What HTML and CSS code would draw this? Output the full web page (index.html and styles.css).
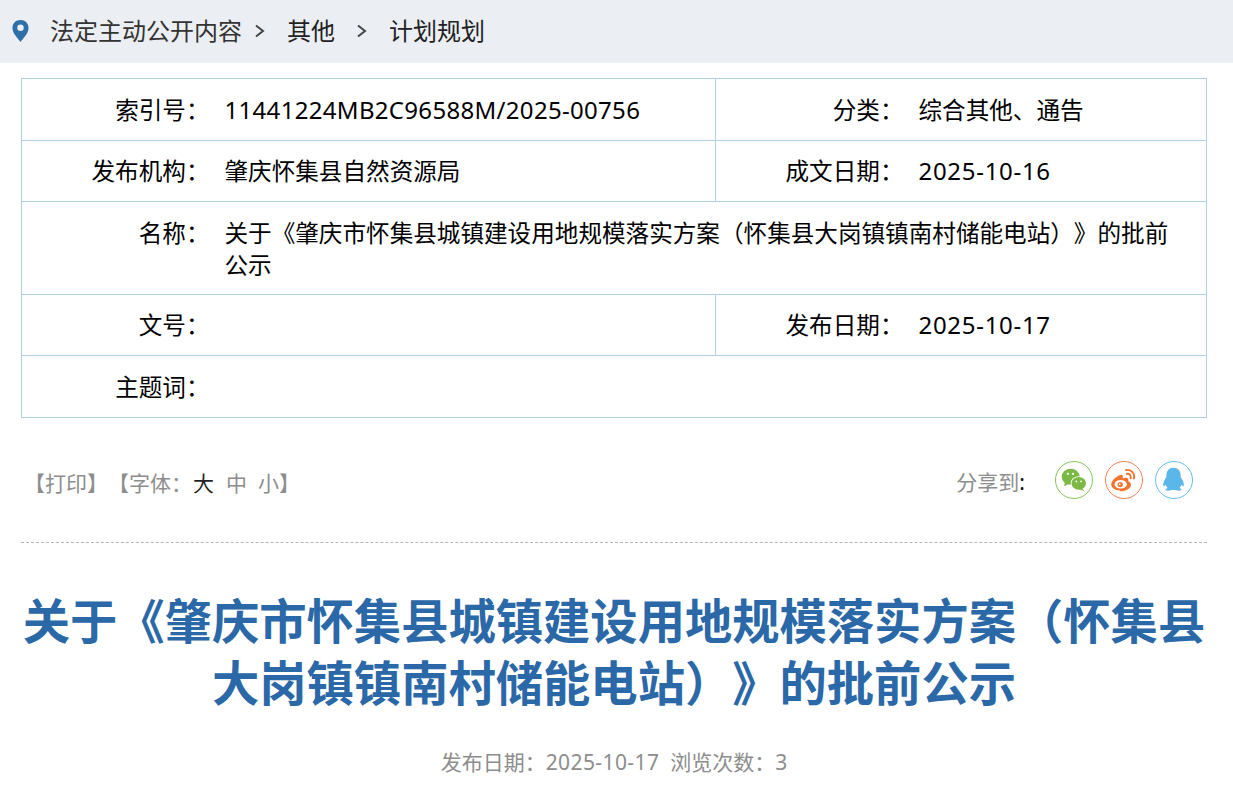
FILE: index.html
```html
<!DOCTYPE html>
<html lang="zh-CN">
<head>
<meta charset="utf-8">
<title>计划规划</title>
<link rel="stylesheet" href="styles.css">
</head>
<body>
<nav class="crumbs">
  <svg class="pin" viewBox="1.5 1.5 15 20.500" width="17" height="22"><path fill="#2f6fa8" d="M9 1.500C4.600 1.500 1.500 4.800 1.500 8.900c0 2.600 1.400 5.300 3.100 7.600C6 18.500 7.800 20.500 9 22c1.200-1.500 3-3.500 4.400-5.500 1.700-2.300 3.100-5 3.100-7.600C16.500 4.800 13.400 1.500 9 1.500zm0 10.300a3 3 0 1 1 0-6 3 3 0 0 1 0 6z"/></svg>
  <a class="crumb first">法定主动公开内容</a>
  <svg class="chev" viewBox="0 0 12 14" width="12" height="14"><path d="M3 1.500 10 7l-7 5.500" fill="none" stroke="#444" stroke-width="2"/></svg>
  <a class="crumb second">其他</a>
  <svg class="chev chev-two" viewBox="0 0 12 14" width="12" height="14"><path d="M3 1.500 10 7l-7 5.500" fill="none" stroke="#444" stroke-width="2"/></svg>
  <a class="crumb third">计划规划</a>
</nav>
<main class="content">
  <table class="info">
    <colgroup><col class="c1"><col class="c2"><col class="c3"><col class="c4"></colgroup>
    <tr class="ra"><th>索引号：</th><td class="id">11441224MB2C96588M/2025-00756</td><th>分类：</th><td>综合其他、通告</td></tr>
    <tr class="rb"><th>发布机构：</th><td>肇庆怀集县自然资源局</td><th>成文日期：</th><td class="date">2025-10-16</td></tr>
    <tr class="rc"><th class="top">名称：</th><td colspan="3" class="long">关于《肇庆市怀集县城镇建设用地规模落实方案（怀集县大岗镇镇南村储能电站）》的批前公示</td></tr>
    <tr class="rb"><th>文号：</th><td></td><th>发布日期：</th><td class="date">2025-10-17</td></tr>
    <tr class="ra"><th>主题词：</th><td colspan="3"></td></tr>
  </table>
  <div class="tools">
    <div class="left">【打印】【字体：<span class="big">大</span><span class="size">中</span><span class="size">小</span>】</div>
    <div class="share">
      <span class="share-label">分享到<b>:</b></span>
      <span class="ico wx"><svg viewBox="0 0 38 38" width="36" height="36"><ellipse cx="15.500" cy="15.500" rx="9.500" ry="8.500" fill="#7cb944"/><path d="M9.500 21l-1 4.500 5.500-2.500z" fill="#7cb944"/><ellipse cx="24" cy="22.500" rx="8.500" ry="7.500" fill="#fff"/><ellipse cx="24" cy="22.500" rx="7.600" ry="6.700" fill="#7cb944"/><path d="M27.500 27.500l2.500 3.500-6-2.500z" fill="#7cb944"/><circle cx="12.500" cy="12.500" r="1.200" fill="#fff"/><circle cx="18" cy="12.500" r="1.200" fill="#fff"/><circle cx="21.500" cy="20.500" r="1" fill="#fff"/><circle cx="26.500" cy="20.500" r="1" fill="#fff"/></svg></span>
      <span class="ico wb"><svg viewBox="0 0 38 38" width="36" height="36"><path fill="#f4732f" d="M15 30c-5.500 0-9.500-2.600-9.500-6.200 0-4 6-9.800 10.200-10.200 2.200-.2 2.400 2 1.900 3.600 2.700-1.100 6-1.100 6 1.500 0 .7 0 1.200-.4 1.700 1.800.6 3.200 1.800 3.200 3.600 0 3.600-5 7-11.400 7z"/><ellipse cx="15.500" cy="23.500" rx="6.500" ry="4.600" fill="#fff"/><circle cx="15" cy="23.800" r="2.800" fill="#f4732f"/><circle cx="14.400" cy="23.400" r=".9" fill="#fff"/><path d="M21 8.500c5-1.100 10 3.300 8.500 9M21.800 12.500c2.800-.7 5 1.900 4.200 4.800" fill="none" stroke="#f4732f" stroke-width="2" stroke-linecap="round"/></svg></span>
      <span class="ico qq"><svg viewBox="0 0 38 38" width="36" height="36"><path fill="#5bb7ea" d="M18.500 6c-4.800 0-7.500 3.500-7.500 8 0 1.300-.1 2.300-.9 3.300-1.400 2-3 5-2.400 7.700.2 1.100 1.300.3 2.400-1.100.4 1.400 1.200 2.600 2.200 3.500-1.400.6-2.600 1.400-2.100 2.200.8 1 4.300.7 6.300 0 .9-.2 3.100-.2 4 0 2 .7 5.500 1 6.300 0 .5-.8-.7-1.600-2.100-2.200 1-.9 1.800-2.100 2.200-3.500 1.100 1.400 2.200 2.200 2.400 1.100.6-2.700-1-5.700-2.400-7.700-.8-1-.9-2-.9-3.300 0-4.500-2.700-8-7.500-8z"/></svg></span>
    </div>
  </div>
  <h1 class="title">关于《肇庆市怀集县城镇建设用地规模落实方案（怀集县大岗镇镇南村储能电站）》的批前公示</h1>
  <p class="meta"><span>发布日期：<span class="meta-num">2025-10-17</span></span><span>浏览次数：3</span></p>
</main>
</body>
</html>
```
FILE: styles.css
```css
* { box-sizing: border-box; }
html, body { margin: 0; padding: 0; background: #fff; overflow: hidden; }
body { font-family: "Noto Sans", "Noto Sans CJK SC", sans-serif; color: #000; height: 804px; text-spacing-trim: space-all; }
.crumbs { height: 63px; background: #ebeef2; display: flex; align-items: center; padding-left: 12px; font-size: 24px; color: #222; }
.pin { flex: none; margin-bottom: 2px; }
.crumb { line-height: 61px; padding-bottom: 2px; }
.first { margin-left: 21px; color: #333; }
.chev { margin-left: 11px; margin-bottom: 2px; }
.second { margin-left: 22px; }
.chev-two { margin-left: 20px; }
.third { margin-left: 22px; }
.content { padding: 15px 26px 0 21px; }
.info { width: 1185px; border-collapse: collapse; table-layout: fixed; font-size: 23.600px; line-height: 32px; border: 1px solid #b1d0e3; }
.c1 { width: 190px; } .c2 { width: 504px; } .c3 { width: 190px; } .c4 { width: 301px; }
.info th, .info td { border-top: 1px solid #b1d0e3; border-bottom: 1px solid #b1d0e3; padding: 0; font-weight: 400; }
.info th { text-align: right; padding-right: 2px; }
.info td { padding-left: 13px; padding-right: 24px; }
.info td:nth-child(2) { border-right: 1px solid #b1d0e3; }
.info td[colspan] { border-right: 0; }
.info td.id { font-size: 24px; letter-spacing: .31px; padding-top: 1px; }
.info td.date { font-size: 24px; letter-spacing: .7px; }
.ra { height: 62px; }
.rb { height: 61px; }
.rc { height: 92px; }
.info th.top { vertical-align: top; padding-top: 15px; }
.info td.long { padding-top: 15px; padding-bottom: 13px; }
.tools { display: flex; justify-content: space-between; align-items: center; height: 125px; border-bottom: 1px dashed #b4b4b4; }
.left { font-size: 21px; color: #8d8d8d; margin-left: 3px; padding-top: 3px; }
.big { color: #222; margin-left: 1px; margin-right: 12px; }
.size { margin-right: 11px; }
.size:last-child { margin-right: 0; }
.share { display: flex; align-items: center; padding-right: 14px; }
.share-label { font-size: 21px; color: #8d8d8d; margin-right: 30px; padding-top: 2px; }
.share-label b { color: #111; font-weight: 400; }
.ico { width: 38px; height: 38px; border-radius: 50%; border: 1px solid; display: flex; align-items: center; justify-content: center; margin-left: 12px; }
.share-label + .ico { margin-left: 0; }
.wx { border-color: #86c65a; }
.wb { border-color: #f58050; }
.qq { border-color: #66bdec; }
.title { margin: 47px -7px 0; text-align: center; font-size: 47.300px; line-height: 62px; font-weight: 700; color: #2a68a7; }
.meta { margin: 33px 0 0; text-align: center; font-size: 21px; color: #8d8d8d; display: flex; justify-content: center; gap: 11px; line-height: 30px; }
.meta-num { letter-spacing: .4px; }
```
